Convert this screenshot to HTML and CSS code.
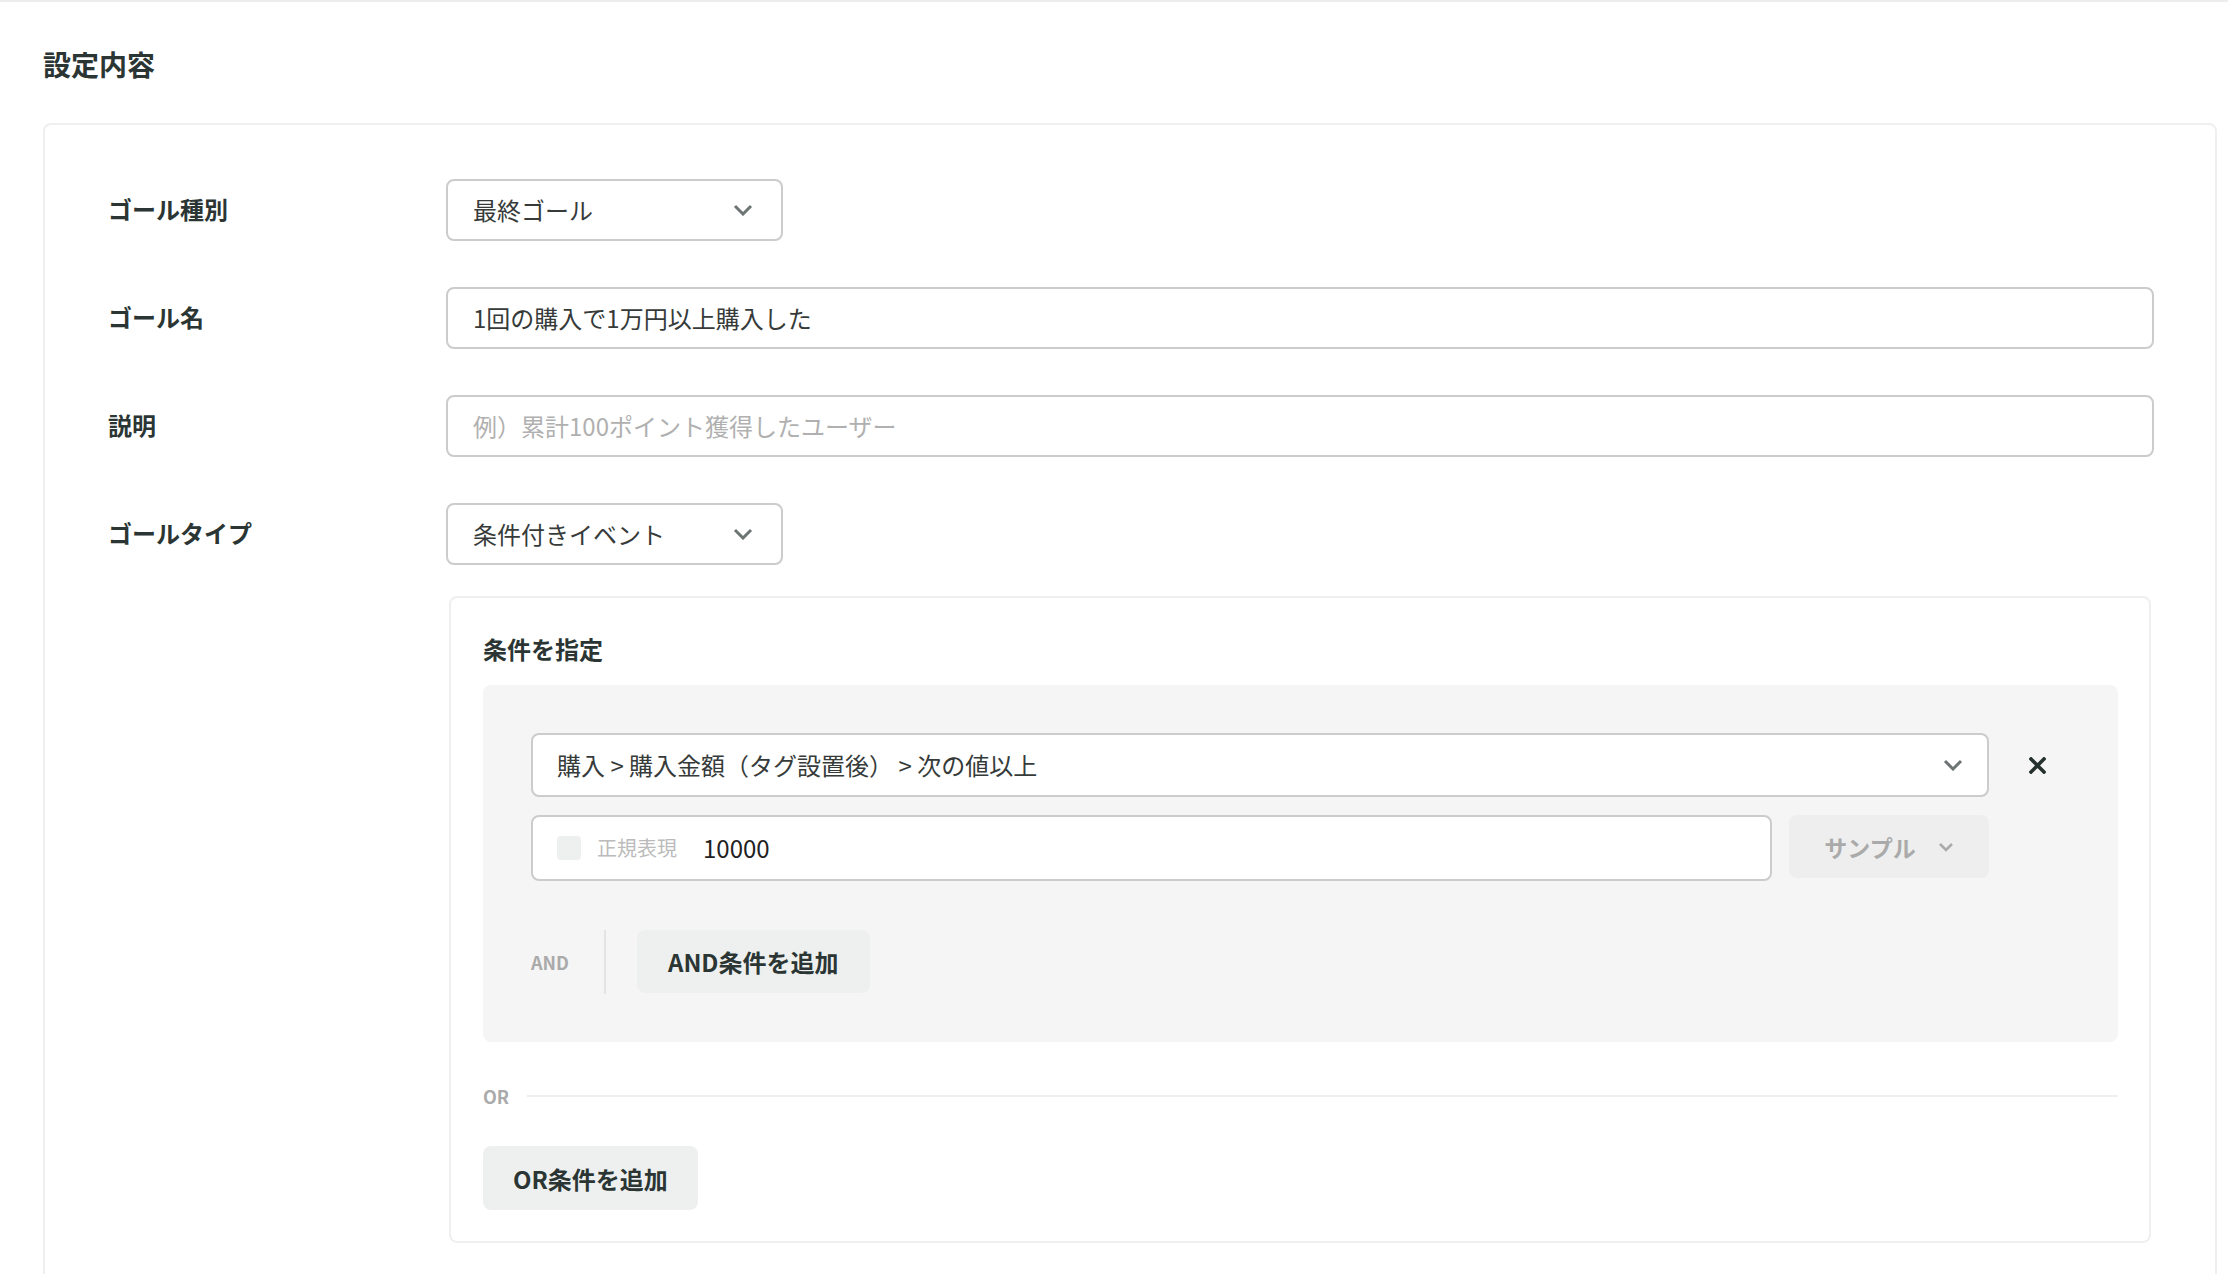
FILE: index.html
```html
<!DOCTYPE html>
<html lang="ja">
<head>
<meta charset="utf-8">
<title>設定内容</title>
<link rel="stylesheet" href="styles.css">
</head>
<body>
<div class="topbar"></div>
<main class="page">
  <h2 class="page-title">設定内容</h2>
  <section class="card">
    <div class="form-row">
      <div class="label">ゴール種別</div>
      <div class="field">
        <div class="control select">
          <span>最終ゴール</span>
          <svg class="chev" width="20" height="12" viewBox="0 0 20 12"><polyline points="2,2 10,10 18,2" fill="none" stroke="currentColor" stroke-width="3"/></svg>
        </div>
      </div>
    </div>
    <div class="form-row">
      <div class="label">ゴール名</div>
      <div class="field">
        <div class="control">1回の購入で1万円以上購入した</div>
      </div>
    </div>
    <div class="form-row">
      <div class="label">説明</div>
      <div class="field">
        <div class="control placeholder">例）累計100ポイント獲得したユーザー</div>
      </div>
    </div>
    <div class="form-row top">
      <div class="label">ゴールタイプ</div>
      <div class="field">
        <div class="control select">
          <span>条件付きイベント</span>
          <svg class="chev" width="20" height="12" viewBox="0 0 20 12"><polyline points="2,2 10,10 18,2" fill="none" stroke="currentColor" stroke-width="3"/></svg>
        </div>
        <div class="cond-card">
          <div class="cond-title">条件を指定</div>
          <div class="cond-group">
            <div class="cond-line">
              <div class="control cond-select">
                <span>購入 &gt; 購入金額（タグ設置後） &gt; 次の値以上</span>
                <svg class="chev" width="20" height="12" viewBox="0 0 20 12"><polyline points="2,2 10,10 18,2" fill="none" stroke="currentColor" stroke-width="3"/></svg>
              </div>
              <div class="remove">
                <svg width="17" height="17" viewBox="0 0 17 17"><path d="M2 2 L15 15 M15 2 L2 15" stroke="currentColor" stroke-width="3.6" stroke-linecap="square" fill="none"/></svg>
              </div>
            </div>
            <div class="cond-line">
              <div class="control value-input">
                <span class="checkbox"></span>
                <span class="regex">正規表現</span>
                <span class="value">10000</span>
              </div>
              <button class="sample">
                <span>サンプル</span>
                <svg width="16" height="10" viewBox="0 0 16 10"><polyline points="2,2 8,8 14,2" fill="none" stroke="currentColor" stroke-width="2.6"/></svg>
              </button>
              <div class="spacer"></div>
            </div>
            <div class="and-row">
              <span class="and-label">AND</span>
              <span class="vdiv"></span>
              <button class="btn">AND条件を追加</button>
            </div>
          </div>
          <div class="or-row">
            <span class="or-label">OR</span>
            <span class="or-line"></span>
          </div>
          <button class="btn or-btn">OR条件を追加</button>
        </div>
      </div>
    </div>
  </section>
</main>
</body>
</html>
```
FILE: styles.css
```css
body {
  margin: 0;
  font-family: "Noto Sans CJK JP", "Noto Sans", sans-serif;
  color: #2b3634;
  background: #ffffff;
}

.topbar {
  height: 2px;
  background: #ededed;
}

.page {
  padding: 0 11px 0 43px;
}

.page-title {
  margin: 42px 0 39px;
  font-size: 28px;
  line-height: 40px;
  font-weight: 700;
}

.card {
  border: 2px solid #efefef;
  border-radius: 8px;
  padding: 54px 61px 56px 63px;
}

.form-row {
  display: flex;
  align-items: center;
}

.form-row + .form-row {
  margin-top: 46px;
}

.form-row.top {
  align-items: flex-start;
}

.label {
  width: 338px;
  flex: none;
  font-size: 24px;
  font-weight: 700;
  line-height: 60px;
  padding-bottom: 2px;
}

.field {
  flex: 1;
  min-width: 0;
}

.control {
  height: 62px;
  box-sizing: border-box;
  border: 2px solid #cccccc;
  border-radius: 8px;
  background: #ffffff;
  display: flex;
  align-items: center;
  padding: 0 25px;
  font-size: 24px;
  line-height: 32px;
  color: #363b3a;
}

.control.select {
  width: 337px;
  justify-content: space-between;
  padding-right: 28px;
}

.chev {
  color: #6d7574;
  flex: none;
}

.placeholder {
  color: #b0b0b0;
}

.cond-card {
  margin: 31px 3px 0;
  border: 2px solid #efefef;
  border-radius: 8px;
  padding: 33px 31px 31px 32px;
}

.cond-title {
  font-size: 24px;
  font-weight: 700;
  line-height: 36px;
  margin-bottom: 18px;
}

.cond-group {
  background: #f5f5f5;
  border-radius: 8px;
  padding: 48px 48px 49px;
}

.cond-line {
  display: flex;
  align-items: flex-start;
}

.cond-line + .cond-line {
  margin-top: 18px;
}

.cond-select {
  flex: 1;
  height: 64px;
  justify-content: space-between;
  padding: 0 24px;
}

.remove {
  width: 81px;
  height: 64px;
  flex: none;
  box-sizing: border-box;
  padding-left: 40px;
  display: flex;
  align-items: center;
  color: #263230;
}

.value-input {
  flex: 1;
  height: 66px;
  padding: 0 24px;
}

.checkbox {
  width: 24px;
  height: 24px;
  border-radius: 4px;
  background: #eef0ef;
  flex: none;
}

.regex {
  margin-left: 16px;
  font-size: 20px;
  color: #bbbbbb;
}

.value {
  margin-left: 26px;
  color: #222222;
}

.sample {
  width: 200px;
  height: 63px;
  margin-left: 17px;
  flex: none;
  border: none;
  border-radius: 8px;
  background: #eeeeee;
  color: #aaaaaa;
  font-family: inherit;
  font-size: 23px;
  font-weight: 700;
  display: flex;
  align-items: center;
  justify-content: center;
  gap: 22px;
  padding: 0;
}

.spacer {
  width: 81px;
  flex: none;
}

.and-row {
  margin-top: 49px;
  display: flex;
  align-items: center;
  height: 63px;
}

.and-label {
  width: 73px;
  font-size: 18px;
  font-weight: 700;
  color: #aaaaaa;
}

.vdiv {
  width: 2px;
  height: 64px;
  background: #e4e4e4;
  margin-right: 31px;
}

.btn {
  height: 63px;
  padding: 0 31px;
  border: none;
  border-radius: 8px;
  background: #eef0ef;
  font-family: inherit;
  font-size: 24px;
  font-weight: 700;
  color: #2b3634;
}

.or-row {
  margin-top: 40px;
  height: 28px;
  display: flex;
  align-items: center;
  gap: 18px;
}

.or-label {
  font-size: 18px;
  font-weight: 700;
  color: #aaaaaa;
}

.or-line {
  flex: 1;
  height: 2px;
  background: #eeeeee;
}

.or-btn {
  display: block;
  margin-top: 36px;
  height: 64px;
  padding: 0 30px;
}
```
